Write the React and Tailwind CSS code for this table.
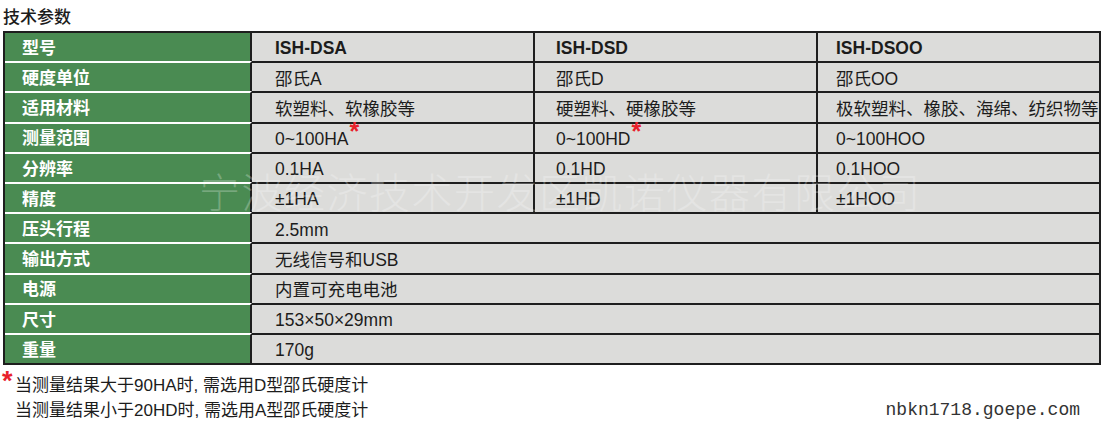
import React from 'react';

const specs = [
  { label: '型号', values: ['ISH-DSA', 'ISH-DSD', 'ISH-DSOO'], bold: true },
  { label: '硬度单位', values: ['邵氏A', '邵氏D', '邵氏OO'] },
  { label: '适用材料', values: ['软塑料、软橡胶等', '硬塑料、硬橡胶等', '极软塑料、橡胶、海绵、纺织物等'] },
  { label: '测量范围', values: ['0~100HA', '0~100HD', '0~100HOO'], star: [true, true, false] },
  { label: '分辨率', values: ['0.1HA', '0.1HD', '0.1HOO'] },
  { label: '精度', values: ['±1HA', '±1HD', '±1HOO'] },
  { label: '压头行程', full: '2.5mm' },
  { label: '输出方式', full: '无线信号和USB' },
  { label: '电源', full: '内置可充电电池' },
  { label: '尺寸', full: '153×50×29mm' },
  { label: '重量', full: '170g' },
];

const colClass = [
  'w-[283px] pl-[23px] border-r-2',
  'w-[283px] pl-[21px] border-r-2',
  'flex-1 pl-[18px]',
];

const Star = () => (
  <span className="relative -top-[8px] ml-px text-[25px] leading-none font-bold text-[#e8212b]">*</span>
);

const App = () => {
  return (
    <div
      className="relative w-[1112px] h-[430px] bg-white text-[#1c1c1c] overflow-hidden"
      style={{ fontFamily: '"Liberation Sans", "Noto Sans CJK SC", sans-serif' }}
    >
      <div className="h-[31px] pl-[3px] pt-[7px] text-[17px] leading-[22px] font-medium">技术参数</div>

      <div className="ml-[3px] w-[1098px] border-l-2 border-r-2 border-b-2 border-[#1e1e1e]">
        {specs.map((row, idx) => (
          <div key={idx} className="flex h-[30.2px]">
            <div
              className={`w-[247px] flex items-center pl-[17px] pt-[3px] bg-[#4a8b52] text-white font-bold text-[17px] border-r-2 border-r-[#1e1e1e] border-t-2 ${
                idx === 0 ? 'border-t-[#1e1e1e]' : 'border-t-white'
              }`}
            >
              {row.label}
            </div>
            {row.full ? (
              <div className="flex-1 flex items-center pl-[23px] pt-[3px] bg-[#dcdcda] text-[17.5px] border-t-2 border-[#1e1e1e]">
                {row.full}
              </div>
            ) : (
              row.values.map((val, vIdx) => (
                <div
                  key={vIdx}
                  className={`${colClass[vIdx]} flex items-center pt-[3px] bg-[#dcdcda] text-[17.5px] border-t-2 border-[#1e1e1e] ${
                    row.bold ? 'font-bold' : ''
                  }`}
                >
                  {val}
                  {row.star?.[vIdx] && <Star />}
                </div>
              ))
            )}
          </div>
        ))}
      </div>

      {/* watermark */}
      <div className="pointer-events-none absolute left-[199px] top-[174px] whitespace-nowrap text-[41px] tracking-[1.5px] leading-none font-light text-white/25">
        宁波经济技术开发区凯诺仪器有限公司
      </div>

      <div className="relative pl-[15px] pt-[8px] text-[17px] leading-[25px]">
        <span className="absolute left-[2px] top-[3px] text-[27px] leading-none font-bold text-[#e8212b]">*</span>
        <div>当测量结果大于90HA时, 需选用D型邵氏硬度计</div>
        <div className="flex items-center">
          <span>当测量结果小于20HD时, 需选用A型邵氏硬度计</span>
          <span
            className="ml-auto mr-[32px] text-[18px] text-[#333]"
            style={{ fontFamily: '"Liberation Mono", monospace' }}
          >
            nbkn1718.goepe.com
          </span>
        </div>
      </div>
    </div>
  );
};

export default App;
